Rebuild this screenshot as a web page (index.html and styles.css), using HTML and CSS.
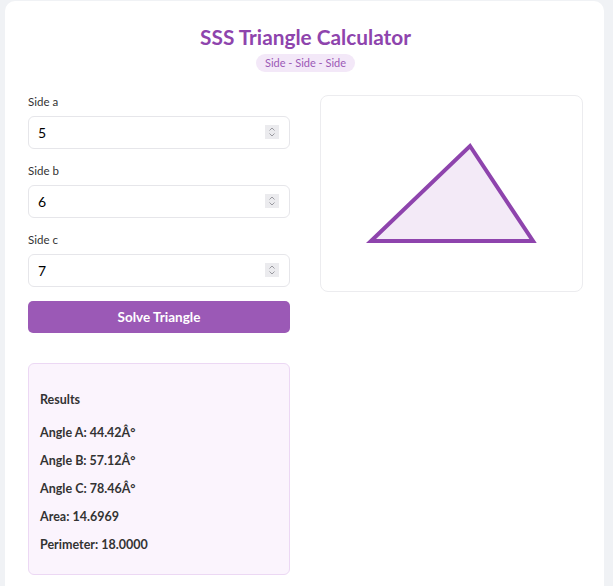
FILE: index.html
```html
<!DOCTYPE html>
<html>
<head>
<meta charset="utf-8">
<link rel="stylesheet" href="styles.css">
</head>
<body>
<div class="card">
  <h1 class="title">SSS Triangle Calculator</h1>
  <div class="badge">Side - Side - Side</div>
  <div class="grid">
    <div class="left">
      <div class="group">
        <label class="label">Side a</label>
        <div class="input-wrap">
          <input class="field" type="text" value="5">
          <span class="spin"><svg width="14" height="14" viewBox="0 0 14 14"><path d="M4.5 5.5 7 3 9.5 5.5M4.5 8.5 7 11 9.5 8.5" fill="none" stroke="#9a9aa0" stroke-width="1"/></svg></span>
        </div>
      </div>
      <div class="group">
        <label class="label">Side b</label>
        <div class="input-wrap">
          <input class="field" type="text" value="6">
          <span class="spin"><svg width="14" height="14" viewBox="0 0 14 14"><path d="M4.5 5.5 7 3 9.5 5.5M4.5 8.5 7 11 9.5 8.5" fill="none" stroke="#9a9aa0" stroke-width="1"/></svg></span>
        </div>
      </div>
      <div class="group">
        <label class="label">Side c</label>
        <div class="input-wrap">
          <input class="field" type="text" value="7">
          <span class="spin"><svg width="14" height="14" viewBox="0 0 14 14"><path d="M4.5 5.5 7 3 9.5 5.5M4.5 8.5 7 11 9.5 8.5" fill="none" stroke="#9a9aa0" stroke-width="1"/></svg></span>
        </div>
      </div>
      <button class="solve">Solve Triangle</button>
      <div class="results">
        <h3 class="results-title">Results</h3>
        <p class="item">Angle A: 44.42Â°</p>
        <p class="item">Angle B: 57.12Â°</p>
        <p class="item">Angle C: 78.46Â°</p>
        <p class="item">Area: 14.6969</p>
        <p class="item">Perimeter: 18.0000</p>
      </div>
    </div>
    <div class="right">
      <div class="canvas">
        <svg class="tri" width="261" height="194" viewBox="0 0 261 194">
          <polygon points="50,145 212,145 149,50" fill="#f3eaf7" stroke="#8e44ad" stroke-width="4"/>
        </svg>
      </div>
    </div>
  </div>
</div>
</body>
</html>
```

FILE: styles.css
```css
html, body {
  margin: 0;
  background: #f0f2f5;
}
body {
  padding: 1px 9px 0 5px;
  font-family: Lato, "Open Sans", sans-serif;
  color: #333;
}
.card {
  background: #fff;
  border-radius: 10px;
  padding: 22px 21px 40px 23px;
  min-height: 560px;
}
.title {
  margin: 0;
  text-align: center;
  font-size: 20.8px;
  line-height: 28px;
  font-weight: 700;
  color: #8e44ad;
}
.badge {
  display: block;
  width: fit-content;
  margin: 3px auto 0;
  background: #f3e8f8;
  color: #9b59b6;
  font-size: 11px;
  line-height: 18px;
  padding: 0 9px;
  border-radius: 10px;
}
.grid {
  display: grid;
  grid-template-columns: 262px 263px;
  column-gap: 30px;
  margin-top: 22px;
  align-items: start;
}
.group {
  margin-bottom: 14px;
}
.label {
  display: block;
  font-size: 11.5px;
  line-height: 16px;
  margin-bottom: 6px;
  color: #333;
}
.input-wrap {
  position: relative;
}
.field {
  display: block;
  box-sizing: border-box;
  width: 100%;
  height: 33px;
  border: 1px solid #e6e6ea;
  border-radius: 6px;
  padding: 0 9px;
  font-family: inherit;
  font-size: 14px;
  color: #000;
  background: #fff;
  outline: none;
}
.spin {
  position: absolute;
  right: 11px;
  top: 9px;
  width: 14px;
  height: 14px;
  background: #ebebee;
}
.spin svg {
  display: block;
}
.solve {
  display: block;
  width: 100%;
  height: 32px;
  margin-top: 2px;
  border: none;
  border-radius: 5px;
  background: #9b59b6;
  color: #fff;
  font-family: inherit;
  font-size: 13.5px;
  font-weight: 700;
}
.results {
  margin-top: 30px;
  background: #fbf4fd;
  border: 1px solid #ecd8f4;
  border-radius: 6px;
  padding: 21px 11px 21px;
}
.results-title {
  margin: 7px 0 17px;
  font-size: 12.5px;
  line-height: 16px;
  font-weight: 700;
}
.item {
  margin: 12px 0 0;
  font-size: 12.5px;
  line-height: 16px;
  font-weight: 700;
}
.results-title + .item {
  margin-top: 0;
}
.right {
  padding-top: 1px;
}
.canvas {
  border: 1px solid #ececef;
  border-radius: 8px;
  height: 195px;
}
.tri {
  display: block;
}
```
